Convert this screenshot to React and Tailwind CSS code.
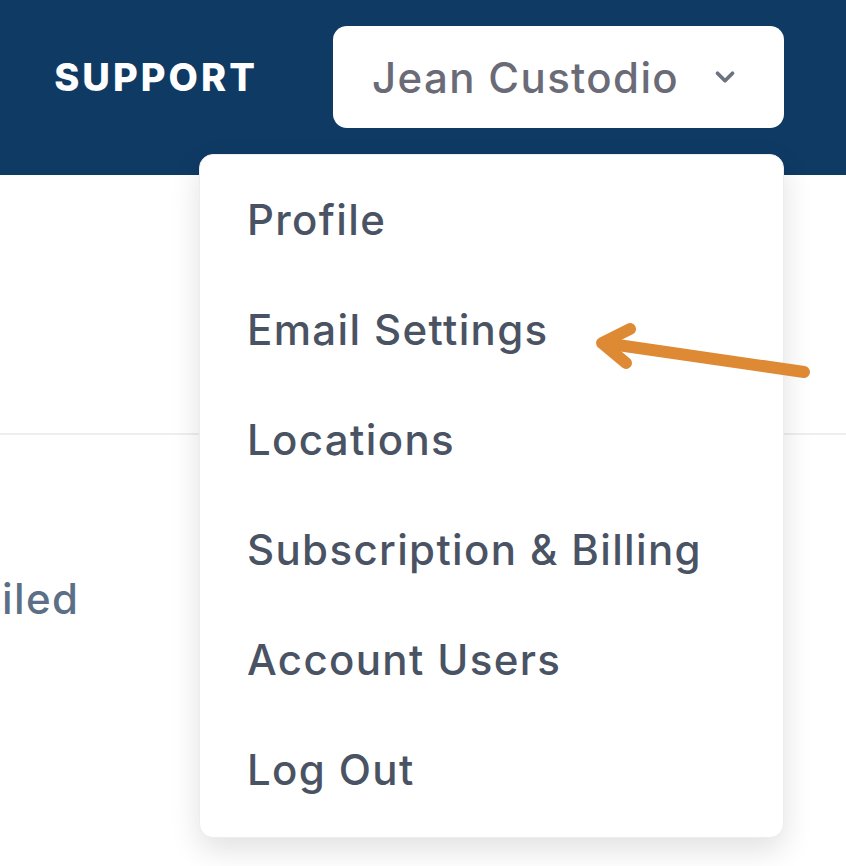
import React from 'react';
import { ChevronDown } from 'lucide-react';

const menuItems = [
  'Profile',
  'Email Settings',
  'Locations',
  'Subscription & Billing',
  'Account Users',
  'Log Out',
];

const App = () => {
  return (
    <div className="relative w-[846px] h-[866px] overflow-hidden bg-white font-['Inter',sans-serif] tracking-[0.085em]">
      {/* Top bar */}
      <header className="h-[175px] bg-[#0f3a64] pt-[26px] pr-[62px]">
        <div className="flex justify-end items-center gap-[75px]">
          <span className="text-white text-[38px] font-extrabold tracking-[0.08em]">SUPPORT</span>
          <button className="w-[451px] h-[102px] bg-white rounded-[14px] flex items-center justify-between pl-[39px] pr-[44px]">
            <span className="text-[#6b6b78] text-[42px] font-medium">Jean Custodio</span>
            <ChevronDown size={30} strokeWidth={3} className="text-[#6b7280]" />
          </button>
        </div>
      </header>

      {/* Page body behind the menu */}
      <div className="h-[260px] border-b-2 border-[#eeeeef]" />
      <div className="pt-[132px] pl-[2px]">
        <span className="text-[#5b6f86] text-[42px] font-medium whitespace-nowrap">iled</span>
      </div>

      {/* Dropdown menu */}
      <div className="absolute top-[154px] right-[62px] w-[585px] bg-white rounded-[14px] border border-[#ededed] shadow-[0_12px_30px_rgba(0,0,0,0.12)] pt-[9px] pb-[13px]">
        {menuItems.map((item) => (
          <div key={item} className="h-[110px] flex items-center pl-[47px]">
            <span className="text-[#4a5363] text-[42px] font-medium">{item}</span>
          </div>
        ))}
      </div>

      {/* Annotation arrow */}
      <svg className="absolute inset-0 pointer-events-none" width="846" height="866" viewBox="0 0 846 866">
        <g stroke="#de8a34" strokeWidth="12" strokeLinecap="round" strokeLinejoin="round" fill="none">
          <line x1="804" y1="372" x2="604" y2="343" />
          <polyline points="630,329 602,343 626,363" />
        </g>
      </svg>
    </div>
  );
};

export default App;
